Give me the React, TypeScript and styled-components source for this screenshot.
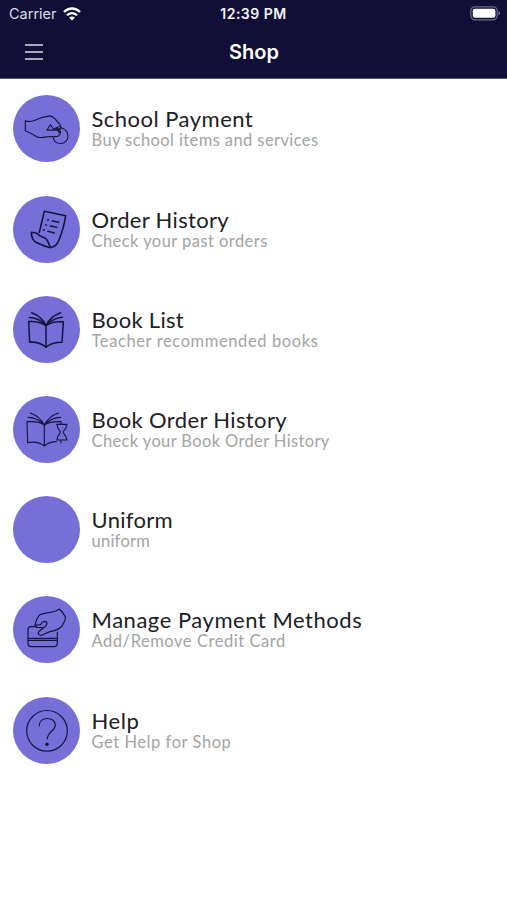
import React from "react";
import styled, { createGlobalStyle } from "styled-components";

const GlobalStyle = createGlobalStyle`
  * { box-sizing: border-box; }
  body { margin: 0; background: #fff; overflow: hidden; }
`;

const Screen = styled.div`
  width: 507px;
  height: 900px;
  background: #fefefe;
  font-family: Lato, sans-serif;
`;

const Header = styled.header`
  height: 79px;
  background: #110f38;
  color: #fff;
  border-bottom: 1px solid #55537a;
  font-family: Inter, sans-serif;
`;

const StatusBar = styled.div`
  height: 27px;
  display: grid;
  grid-template-columns: 1fr auto 1fr;
  align-items: center;
  padding: 0 6px 0 9px;
`;

const Carrier = styled.div`
  display: flex;
  align-items: center;
  gap: 6px;
  font-size: 14.5px;
  line-height: 27px;
  color: #dcdce6;
`;

const Clock = styled.time`
  font-size: 14px;
  font-weight: 600;
  letter-spacing: 0.5px;
  margin-right: 3px;
  color: #f4f4f8;
`;

const Battery = styled.svg`
  justify-self: end;
`;

const NavBar = styled.nav`
  height: 50px;
  display: grid;
  grid-template-columns: 1fr auto 1fr;
  align-items: center;
  padding: 0 25px;
`;

const MenuButton = styled.button`
  width: 18px;
  height: 16px;
  padding: 0;
  border: 0;
  background: none;
  display: flex;
  flex-direction: column;
  justify-content: space-between;
`;

const MenuLine = styled.span`
  height: 2px;
  width: 100%;
  background: #a8a7bc;
`;

const PageTitle = styled.h1`
  margin: 0 0 0 1px;
  font-size: 20px;
  font-weight: 600;
  line-height: 24px;
`;

const List = styled.ul`
  list-style: none;
  margin: 0;
  padding: 16.4px 13px 0;
  display: flex;
  flex-direction: column;
  gap: 33.2px;
`;

const Row = styled.li`
  display: flex;
  gap: 11.5px;
  height: 67px;
`;

const Disc = styled.div`
  flex: none;
  width: 67px;
  height: 67px;
  border-radius: 50%;
  background: #766fd8;
  overflow: hidden;
`;

const Glyph = styled.svg<{ $weight: number }>`
  display: block;
  width: 67px;
  height: 67px;
  fill: none;
  stroke: #17153f;
  stroke-width: ${(p) => p.$weight};
  stroke-linecap: round;
  stroke-linejoin: round;
`;

const Labels = styled.div`
  padding-top: 12px;
  white-space: nowrap;
`;

const Title = styled.div<{ $track: number }>`
  font-size: 22px;
  line-height: 23px;
  letter-spacing: ${(p) => p.$track}px;
  color: #202024;
`;

const Subtitle = styled.div<{ $track: number }>`
  font-size: 16.5px;
  line-height: 20px;
  letter-spacing: ${(p) => p.$track}px;
  color: #a4a4a4;
`;

const coinHand = (
  <>
    <path d="M52 93 C66 97 76 95 84 90 C98 83 112 80 126 78 C133 79 137 83 142 88 L157 106 C160 111 158 117 152 119" />
    <path d="M52 93 V123 C67 129 78 136 88 142 C101 145 115 141 126 140 C136 140 142 141 148 140 C155 137 158 132 157 125 C150 121 143 119 136 121 L117 121 L127 104 L137 119 C144 114 150 111 155 110" />
    <path d="M159 114 C171 118 180 128 180 139 C180 152 170 161 158 161 C146 161 137 154 136 143" />
    <path d="M143 116 L156 119 M152 126 L157 127" strokeWidth="5" />
  </>
);

const receipt = (
  <>
    <path d="M94 125 L109 62 L173 75 C169 99 164 122 154 145 C150 158 141 169 127 171 C124 162 121 152 115 145 C107 138 97 139 90 131 C86 125 78 126 70 125 C70 139 73 149 84 155 C98 162 112 169 127 171" />
    <path d="M133 91 L152 95 M127 106 L146 110 M120 122 L139 127" />
    <path d="M120 88h.1 M114 103h.1 M108 118h.1" strokeWidth="5.5" />
  </>
);

const openBook = (
  <>
    <path d="M70 93 H62 L65 155 C85 154 101 159 114 170 C126 159 143 155 162 155 L166 94 H157" />
    <path d="M70 93 C88 93 101 97 114 105 C127 97 140 93 157 94 M114 105 V170" />
    <path d="M64 81 C83 81 101 91 114 105 C127 91 144 81 163 80 M71 67 C91 74 105 87 114 105 C123 87 138 74 158 67" />
  </>
);

const bookTimer = (
  <>
    <path d="M63 94 H57 L59 157 C79 153 95 156 109 167 C120 158 132 154 145 154 M63 94 C82 93 97 96 109 104 C121 96 136 93 159 94 V100 M109 104 V167" />
    <path d="M60 81 C79 81 96 90 109 104 C122 90 139 81 158 81 M67 68 C87 75 101 88 109 104 C117 88 131 75 151 68" />
    <path d="M146 102 H177 M146 149 H177 M148 102 V108 C148 117 157 120 157 125.5 C157 131 148 135 148 143 V149 M175 102 V108 C175 117 166 120 166 125.5 C166 131 175 135 175 143 V149 M159 149 V157" />
  </>
);

const cardHand = (
  <>
    <path d="M84 110 H68 C62 110 60 114 60 119 V160 C60 167 63 170 69 170 H138 C145 170 148 167 148 160 V126 M60 145 H148 M60 151 H148" />
    <path d="M81 106 C84 92 90 78 98 73 C112 69 129 68 143 63 L154 57 C160 62 167 71 172 81 C174 89 168 98 162 108 C152 119 140 123 126 125 C115 128 107 136 98 136 C91 134 90 130 91 127 C95 121 103 118 109 112 C119 104 119 95 110 94 C104 94 101 99 97 104 L81 106 L86 112 L104 113" />
  </>
);

const question = (
  <>
    <circle cx="117" cy="120" r="61" />
    <path d="M94 105 C94 90 105 83 118 83 C132 83 142 91 142 103 C142 119 119 121 118 144" />
    <circle cx="117" cy="160" r="3.5" fill="#090820" />
  </>
);

const items = [
  { title: "School Payment", sub: "Buy school items and services", track: 0.48, subTrack: 0.4, icon: coinHand, top: 15.5, weight: 3.4 },
  { title: "Order History", sub: "Check your past orders", track: 0.33, subTrack: 0.44, icon: receipt, top: 16, weight: 4.8 },
  { title: "Book List", sub: "Teacher recommended books", track: 0.3, subTrack: 0.61, icon: openBook, top: 16.5, weight: 4.6 },
  { title: "Book Order History", sub: "Check your Book Order History", track: 0.36, subTrack: 0.37, icon: bookTimer, top: 17, weight: 3.4 },
  { title: "Uniform", sub: "uniform", track: 0.3, subTrack: 0.25, icon: null, top: 17, weight: 3 },
  { title: "Manage Payment Methods", sub: "Add/Remove Credit Card", track: 0.53, subTrack: 0.55, icon: cardHand, top: 18, weight: 3.6 },
  { title: "Help", sub: "Get Help for Shop", track: 0.6, subTrack: 0.55, icon: question, top: 18.5, weight: 3.6 },
];

export default function App() {
  return (
    <Screen>
      <GlobalStyle />
      <Header>
        <StatusBar>
          <Carrier>
            Carrier
            <svg width="18" height="14" viewBox="0 0 18 14" fill="none" stroke="#fff" strokeWidth="2.3">
              <path d="M1 5 C5.5 .3 12.5 .3 17 5 M4 8.2 C6.8 5.3 11.2 5.3 14 8.2" />
              <path d="M9 13.6 L6.2 10.7 C7.8 9.2 10.2 9.2 11.8 10.7 Z" fill="#fff" stroke="none" />
            </svg>
          </Carrier>
          <Clock>12:39 PM</Clock>
          <Battery width="31" height="15" viewBox="0 0 31 15">
            <rect x=".8" y=".8" width="26.4" height="13" rx="4" fill="none" stroke="#6b698b" strokeWidth="1.2" />
            <rect x="2.8" y="2.8" width="22.6" height="9" rx="2" fill="#fff" />
            <path d="M28.6 5 C30.5 5.8 30.5 8.8 28.6 9.6Z" fill="#7c7a99" />
          </Battery>
        </StatusBar>
        <NavBar>
          <MenuButton aria-label="Menu">
            <MenuLine />
            <MenuLine />
            <MenuLine />
          </MenuButton>
          <PageTitle>Shop</PageTitle>
        </NavBar>
      </Header>
      <List>
        {items.map((item) => (
          <Row key={item.title}>
            <Disc>
              {item.icon && (
                <Glyph $weight={item.weight} viewBox={`15 ${item.top} 201 201`}>
                  {item.icon}
                </Glyph>
              )}
            </Disc>
            <Labels>
              <Title $track={item.track}>{item.title}</Title>
              <Subtitle $track={item.subTrack}>{item.sub}</Subtitle>
            </Labels>
          </Row>
        ))}
      </List>
    </Screen>
  );
}
